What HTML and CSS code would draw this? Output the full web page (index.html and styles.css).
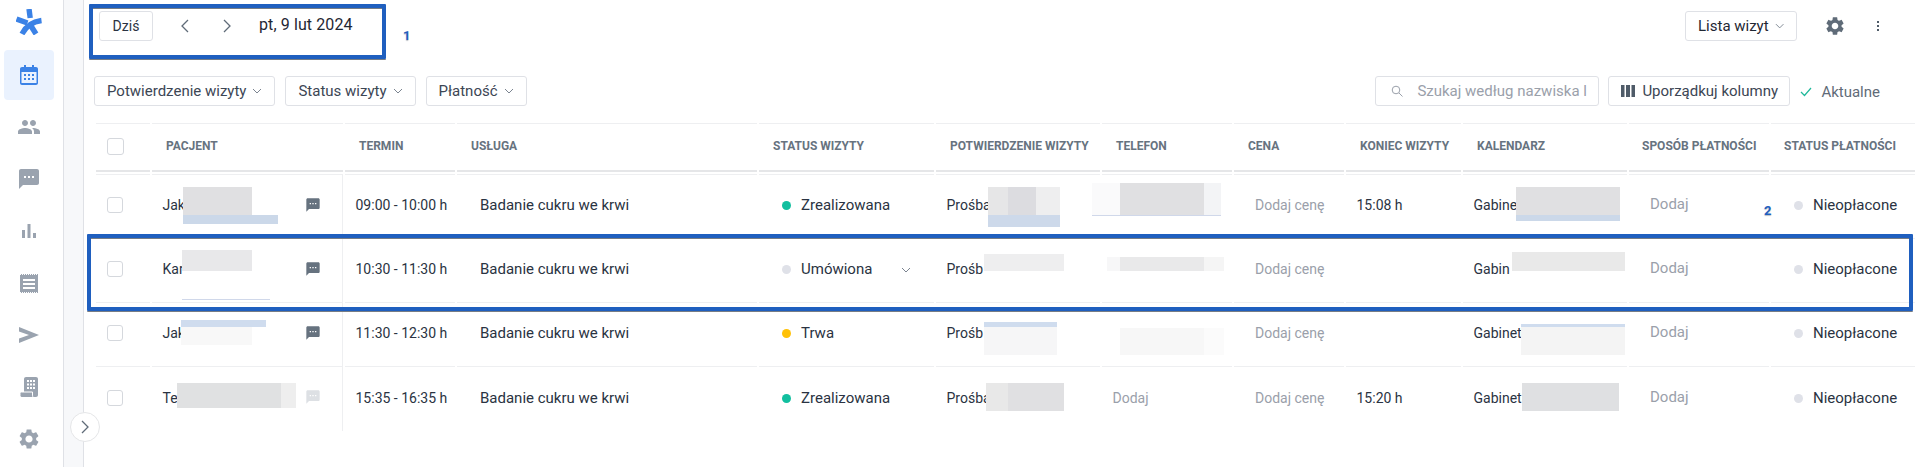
FILE: index.html
```html
<!DOCTYPE html>
<html lang="pl">
<head>
    <meta charset="UTF-8">
    <meta name="viewport" content="width=device-width, initial-scale=1.0">
    <title>Lista wizyt</title>
    <link rel="stylesheet" href="styles.css">
</head>
<body>
    <svg class="defs" aria-hidden="true">
        <symbol id="chev" viewBox="0 0 10 6"><path d="M1 1l4 4 4-4" fill="none" stroke="currentColor" stroke-width="1"/></symbol>
        <symbol id="sms" viewBox="0 0 24 24"><path fill="currentColor" d="M20 2H4c-1.100 0-1.990.9-1.990 2L2 22l4-4h14c1.100 0 2-.9 2-2V4c0-1.100-.9-2-2-2zM9 11H7V9h2v2zm4 0h-2V9h2v2zm4 0h-2V9h2v2z"/></symbol>
        <symbol id="gear" viewBox="0 0 24 24"><path fill="currentColor" d="M19.14 12.94c.04-.3.06-.61.06-.94 0-.32-.02-.64-.07-.94l2.03-1.58c.18-.14.23-.41.12-.61l-1.92-3.32c-.12-.22-.37-.29-.59-.22l-2.39.96c-.5-.38-1.03-.7-1.62-.94l-.36-2.54c-.04-.24-.24-.41-.48-.41h-3.84c-.24 0-.43.17-.47.41l-.36 2.54c-.59.24-1.13.57-1.62.94l-2.39-.96c-.22-.08-.47 0-.59.22L2.74 8.87c-.12.21-.08.47.12.61l2.03 1.58c-.05.3-.09.63-.09.94s.02.64.07.94l-2.03 1.58c-.18.14-.23.41-.12.61l1.92 3.32c.12.22.37.29.59.22l2.39-.96c.5.38 1.03.7 1.62.94l.36 2.54c.05.24.24.41.48.41h3.84c.24 0 .44-.17.47-.41l.36-2.54c.59-.24 1.13-.56 1.62-.94l2.39.96c.22.08.47 0 .59-.22l1.92-3.32c.12-.22.07-.47-.12-.61l-2.01-1.58zM12 15.6c-1.980 0-3.600-1.620-3.600-3.600s1.620-3.600 3.600-3.600 3.600 1.620 3.600 3.600-1.620 3.600-3.600 3.600z"/></symbol>
    </svg>

    <div class="app">
        <aside class="sidebar">
            <svg class="logo" viewBox="0 0 26 26">
                <g fill="none" stroke="#3b82e6" stroke-width="5.400">
                    <path d="M13 0l1.200 9"/>
                    <path d="M0.500 10l11 4"/>
                    <path d="M25.500 11.500c-8 1-15.500 5.500-19.500 13.500"/>
                    <path d="M15 17l5 8"/>
                </g>
            </svg>
            <nav class="nav">
                <a class="nav-item active">
                    <svg width="18" height="20" viewBox="0 0 18 20"><path fill="currentColor" d="M4 0h2v2h6V0h2v2h2c1.100 0 2 .9 2 2v14c0 1.100-.9 2-2 2H2c-1.100 0-2-.9-2-2V4c0-1.100.9-2 2-2h2z"/><path fill="#eaf2fe" d="M1.500 7h15v11h-15z"/><path fill="currentColor" d="M4 9h2v2H4zm4 0h2v2H8zm4 0h2v2h-2zM4 13h2v2H4zm4 0h2v2H8zm4 0h2v2h-2z"/></svg>
                </a>
                <a class="nav-item">
                    <svg width="24" height="24" viewBox="0 0 24 24"><path fill="currentColor" d="M16 11c1.660 0 2.990-1.340 2.990-3S17.660 5 16 5c-1.660 0-3 1.340-3 3s1.340 3 3 3zm-8 0c1.660 0 2.990-1.340 2.990-3S9.660 5 8 5C6.340 5 5 6.340 5 8s1.340 3 3 3zm0 2c-2.330 0-7 1.170-7 3.500V19h14v-2.500c0-2.330-4.670-3.500-7-3.500zm8 0c-.29 0-.62.02-.97.05 1.160.84 1.970 1.970 1.970 3.450V19h6v-2.500c0-2.330-4.670-3.500-7-3.500z"/></svg>
                </a>
                <a class="nav-item"><svg width="24" height="24"><use href="#sms"/></svg></a>
                <a class="nav-item">
                    <svg width="14" height="14" viewBox="0 0 14 14"><path fill="currentColor" d="M0 6h3v8H0zM5.500 0h3v14h-3zM11 9h3v5h-3z"/></svg>
                </a>
                <a class="nav-item">
                    <svg width="18" height="19" viewBox="0 0 18 19"><path fill="currentColor" d="M0 0h18v19H0z"/><path fill="#fff" d="M3 5h12v2H3zm0 4h12v2H3zm0 4h12v2H3z"/><path d="M0 .5h18M0 18.500h18" stroke="#fff" stroke-width="1" stroke-dasharray="1 1"/></svg>
                </a>
                <a class="nav-item">
                    <svg width="20" height="16" viewBox="0 0 20 16"><path fill="currentColor" d="M0 0l20 8L0 16v-4.500L10 8 0 4.500z"/></svg>
                </a>
                <a class="nav-item">
                    <svg width="18" height="20" viewBox="0 0 18 20"><path fill="currentColor" d="M6 0h10c1.100 0 2 .9 2 2v16c0 1.100-.9 2-2 2H6c-1.100 0-2-.9-2-2V2c0-1.100.9-2 2-2z"/><path fill="currentColor" stroke="#fff" stroke-width="1" d="M1.500 15h11v3c0 1.100.4 2.500 1 2.500H2c-1.100 0-2-.9-2-2v-2c0-.8.7-1.500 1.500-1.500z"/><path fill="#fff" d="M7 3h2v2H7zm3 0h2v2h-2zm3 0h2v2h-2zM7 6.500h2v2H7zm3 0h2v2h-2zm3 0h2v2h-2zM7 10h2v2H7zm3 0h2v2h-2zm3 0h2v2h-2z"/></svg>
                </a>
                <a class="nav-item"><svg width="24" height="24"><use href="#gear"/></svg></a>
            </nav>
        </aside>
        <div class="strip"></div>

        <main class="main">
            <header class="toolbar">
                <div class="date-nav">
                    <button class="btn today">Dziś</button>
                    <svg class="arrow first" width="9" height="14" viewBox="0 0 9 14"><path d="M8 1L2 7l6 6" fill="none" stroke="#5f6b78" stroke-width="1.300"/></svg>
                    <svg class="arrow" width="9" height="14" viewBox="0 0 9 14"><path d="M1 1l6 6-6 6" fill="none" stroke="#5f6b78" stroke-width="1.300"/></svg>
                    <span class="date">pt, 9 lut 2024</span>
                </div>
                <div class="view-tools">
                    <button class="btn view-btn">Lista wizyt <svg class="chev"><use href="#chev"/></svg></button>
                    <svg class="top-gear" width="22" height="22"><use href="#gear"/></svg>
                    <svg class="kebab" width="4" height="12" viewBox="0 0 4 12"><path fill="#4f5b68" d="M1 1h2v2H1zm0 4h2v2H1zm0 4h2v2H1z"/></svg>
                </div>
            </header>

            <section class="filters">
                <button class="btn filter">Potwierdzenie wizyty <svg class="chev"><use href="#chev"/></svg></button>
                <button class="btn filter">Status wizyty <svg class="chev"><use href="#chev"/></svg></button>
                <button class="btn filter">Płatność <svg class="chev"><use href="#chev"/></svg></button>
                <div class="filters-right">
                    <div class="search">
                        <svg width="12" height="12" viewBox="0 0 12 12"><circle cx="5" cy="5" r="3.800" fill="none" stroke="#9aa0aa" stroke-width="1"/><path d="M8 8l3.500 3.500" stroke="#9aa0aa" stroke-width="1"/></svg>
                        <span>Szukaj według nazwiska l</span>
                    </div>
                    <button class="btn columns-btn">
                        <svg width="14" height="12" viewBox="0 0 14 12"><path fill="#4f5b68" d="M0 0h3.500v12H0zm5 0h4v12H5zm5.500 0H14v12h-3.500z"/></svg>
                        Uporządkuj kolumny
                    </button>
                    <span class="synced">
                        <svg width="12" height="10" viewBox="0 0 12 10"><path d="M1 5l3.500 3.500L11 1" fill="none" stroke="#1fb89a" stroke-width="1.200"/></svg>
                        Aktualne
                    </span>
                </div>
            </section>

            <table class="visits">
                <colgroup>
                    <col class="c-check"><col class="c-patient"><col class="c-term"><col class="c-service">
                    <col class="c-status"><col class="c-confirm"><col class="c-phone"><col class="c-price">
                    <col class="c-end"><col class="c-cal"><col class="c-method"><col class="c-pay">
                </colgroup>
                <thead>
                    <tr>
                        <th><span class="checkbox head"></span></th>
                        <th>Pacjent</th>
                        <th>Termin</th>
                        <th>Usługa</th>
                        <th>Status wizyty</th>
                        <th>Potwierdzenie wizyty</th>
                        <th>Telefon</th>
                        <th>Cena</th>
                        <th>Koniec wizyty</th>
                        <th>Kalendarz</th>
                        <th>Sposób płatności</th>
                        <th>Status płatności</th>
                    </tr>
                </thead>
                <tbody>
                    <tr>
                        <td><span class="checkbox"></span></td>
                        <td class="patient">Jak<i class="blot b1a"></i><i class="blot b1b"></i><svg class="note" width="16" height="16"><use href="#sms"/></svg></td>
                        <td>09:00 - 10:00 h</td>
                        <td class="wide big">Badanie cukru we krwi</td>
                        <td class="wide big"><span class="dot green"></span>Zrealizowana</td>
                        <td>Prośba<i class="blot b2a"></i><i class="blot b2b"></i></td>
                        <td><i class="blot b3a"></i></td>
                        <td class="add muted">Dodaj cenę</td>
                        <td>15:08 h</td>
                        <td>Gabine<i class="blot b4a"></i><i class="blot b4b"></i></td>
                        <td class="add big muted">Dodaj</td>
                        <td class="wide big"><span class="dot grey"></span>Nieopłacone</td>
                    </tr>
                    <tr>
                        <td><span class="checkbox"></span></td>
                        <td class="patient">Kar<i class="blot c1a"></i><i class="blot c1b"></i><svg class="note" width="16" height="16"><use href="#sms"/></svg></td>
                        <td>10:30 - 11:30 h</td>
                        <td class="wide big">Badanie cukru we krwi</td>
                        <td class="wide big"><span class="dot grey"></span>Umówiona<svg class="chev row-chev"><use href="#chev"/></svg></td>
                        <td>Prośb<i class="blot c2a"></i></td>
                        <td><i class="blot c3a"></i></td>
                        <td class="add muted">Dodaj cenę</td>
                        <td></td>
                        <td>Gabin<i class="blot c4a"></i></td>
                        <td class="add big muted">Dodaj</td>
                        <td class="wide big"><span class="dot grey"></span>Nieopłacone</td>
                    </tr>
                    <tr>
                        <td><span class="checkbox"></span></td>
                        <td class="patient">Jak<i class="blot d1a"></i><i class="blot d1b"></i><svg class="note" width="16" height="16"><use href="#sms"/></svg></td>
                        <td>11:30 - 12:30 h</td>
                        <td class="wide big">Badanie cukru we krwi</td>
                        <td class="wide big"><span class="dot amber"></span>Trwa</td>
                        <td>Prośb<i class="blot d2a"></i><i class="blot d2b"></i></td>
                        <td><i class="blot d3a"></i></td>
                        <td class="add muted">Dodaj cenę</td>
                        <td></td>
                        <td>Gabinet<i class="blot d4a"></i><i class="blot d4b"></i></td>
                        <td class="add big muted">Dodaj</td>
                        <td class="wide big"><span class="dot grey"></span>Nieopłacone</td>
                    </tr>
                    <tr>
                        <td><span class="checkbox"></span></td>
                        <td class="patient">Te<i class="blot e1a"></i><svg class="note faint" width="16" height="16"><use href="#sms"/></svg></td>
                        <td>15:35 - 16:35 h</td>
                        <td class="wide big">Badanie cukru we krwi</td>
                        <td class="wide big"><span class="dot green"></span>Zrealizowana</td>
                        <td>Prośba<i class="blot e2a"></i></td>
                        <td class="muted">Dodaj</td>
                        <td class="add muted">Dodaj cenę</td>
                        <td>15:20 h</td>
                        <td>Gabinet<i class="blot e4a"></i></td>
                        <td class="add big muted">Dodaj</td>
                        <td class="wide big"><span class="dot grey"></span>Nieopłacone</td>
                    </tr>
                </tbody>
            </table>
        </main>

        <!-- things that sit on top of the page -->
        <button class="collapse"><svg width="9" height="14" viewBox="0 0 9 14"><path d="M1 1l6 6-6 6" fill="none" stroke="#5f6b78" stroke-width="1.300"/></svg></button>
        <div class="mark mark-date"></div>
        <div class="mark mark-row"></div>
        <span class="mark-num num-1">1</span>
        <span class="mark-num num-2">2</span>
    </div>
</body>
</html>
```

FILE: styles.css
```css
* {
    box-sizing: border-box;
}
html, body {
    margin: 0;
    padding: 0;
    height: 100%;
    overflow: hidden;
    background-color: white;
}
body {
    font-family: Roboto, "Liberation Sans", sans-serif;
    font-size: 14px;
    color: #2a3342;
}
.defs {
    position: absolute;
    width: 0;
    height: 0;
}
.app {
    position: relative;
    display: flex;
    height: 467px;
}

/* sidebar */
.sidebar {
    width: 64px;
    flex-shrink: 0;
    padding: 9px 9px 0 4px;
    border-right: 1px solid #dfe1e6;
}
.logo {
    display: block;
    width: 26px;
    height: 26px;
    margin: 0 0 15px 12px;
}
.nav {
    display: flex;
    flex-direction: column;
    gap: 2px;
}
.nav-item {
    display: flex;
    align-items: center;
    justify-content: center;
    width: 50px;
    height: 50px;
    border-radius: 4px;
    color: #9aa3af;
}
.nav-item.active {
    background-color: #eaf2fe;
    color: #3b82e6;
}
.strip {
    width: 20px;
    flex-shrink: 0;
    background-color: #f7f8fa;
    border-right: 1px solid #dfe1e6;
}

/* toolbar */
.main {
    flex: 1;
    min-width: 0;
    padding: 10px 2px 0 10px;
}
.toolbar {
    display: flex;
    justify-content: space-between;
    height: 31px;
}
.date-nav {
    display: flex;
    align-items: center;
    padding-left: 5px;
}
.btn {
    display: inline-flex;
    align-items: center;
    height: 30px;
    padding: 0 12px;
    background-color: white;
    border: 1px solid #dfe1e6;
    border-radius: 3px;
    font-family: inherit;
    font-size: 15px;
    color: #2a3342;
    white-space: nowrap;
}
.today {
    width: 54px;
    justify-content: center;
    padding: 0;
    font-size: 14px;
}
.arrow {
    margin-left: 34px;
}
.arrow.first {
    margin-left: 27px;
}
.date {
    margin: 0 0 3px 27px;
    font-size: 16px;
    letter-spacing: 0.1px;
    color: #1f2733;
}
.view-tools {
    display: flex;
    align-items: center;
    padding-right: 33px;
}
.view-btn {
    width: 112px;
    color: #1f2733;
}
.chev {
    width: 10px;
    height: 6px;
    margin-left: 6px;
    color: #7b8490;
}
.top-gear {
    margin-left: 27px;
    color: #5f6b78;
}
.kebab {
    margin-left: 30px;
}

/* filters */
.filters {
    display: flex;
    gap: 10px;
    margin-top: 35px;
}
.filters .btn {
    color: #3c4654;
}
.filters-right {
    display: flex;
    align-items: center;
    margin-left: auto;
    padding-right: 33px;
}
.search {
    display: flex;
    align-items: center;
    gap: 14px;
    width: 224px;
    height: 30px;
    padding-left: 15px;
    border: 1px solid #dfe1e6;
    border-radius: 3px;
    font-size: 15px;
    color: #9aa0aa;
    white-space: nowrap;
    overflow: hidden;
}
.columns-btn {
    gap: 7px;
    width: 182px;
    margin-left: 9px;
    padding: 0 0 0 12px;
}
.synced {
    display: flex;
    align-items: center;
    gap: 9px;
    margin-left: 10px;
    padding-top: 2px;
    font-size: 15px;
    color: #5f6b78;
}

/* table */
.visits {
    table-layout: fixed;
    border-collapse: separate;
    border-spacing: 2px 0;
    width: 1821px;
    margin-top: 17px;
}
.c-check { width: 54px; }
.c-patient { width: 191px; }
.c-term { width: 110px; }
.c-service { width: 300px; }
.c-status { width: 175px; }
.c-confirm { width: 164px; }
.c-phone { width: 130px; }
.c-price { width: 110px; }
.c-end { width: 115px; }
.c-cal { width: 164px; }
.c-method { width: 140px; }
.c-pay { width: 144px; }

.visits thead::after {
    content: "";
    display: table-row;
    height: 2px;
}
.visits th {
    height: 49px;
    padding: 0 0 2px 14px;
    border-top: 1px solid #eeeff1;
    border-bottom: 2px solid #e5e6e8;
    text-align: left;
    font-size: 12px;
    font-weight: 700;
    text-transform: uppercase;
    white-space: nowrap;
    color: #67737f;
}
.visits th:nth-child(n+11) {
    padding-left: 13px;
}
.visits td {
    position: relative;
    height: 64px;
    padding: 0 0 3px 10.500px;
    border-bottom: 1px solid #eeeff1;
    font-size: 14px;
    white-space: nowrap;
}
.visits tbody tr:first-child td {
    height: 65px;
    border-top: 1px solid #eeeff1;
}
.visits tbody tr:last-child td {
    border-bottom: none;
}
.visits td.wide {
    padding-left: 23px;
}
.visits td.add {
    padding-left: 21px;
}
.visits td.big {
    font-size: 15px;
}
.visits td.add.big {
    padding-bottom: 5px;
}
.visits td.patient {
    border-right: 1px solid #eeeff1;
}
.muted {
    color: #9aa0aa;
}
.checkbox {
    display: block;
    width: 16px;
    height: 16px;
    border: 1px solid #d5d8dd;
    border-radius: 3px;
}
.checkbox.head {
    width: 17px;
    height: 17px;
    margin-left: -3px;
}
.note {
    position: absolute;
    left: 153px;
    top: 22px;
    color: #66727f;
}
.note.faint {
    color: #dde0e4;
}
.dot {
    display: inline-block;
    width: 9px;
    height: 9px;
    margin-right: 10px;
    border-radius: 50%;
}
.dot.green { background-color: #12bf9f; }
.dot.amber { background-color: #ffc107; }
.dot.grey { background-color: #dfe1e8; }
.row-chev {
    position: absolute;
    left: 136px;
    top: 28px;
}

/* blurred-out personal data, sits over the cell text */
.blot {
    position: absolute;
    display: block;
}
.b1a { left: 31px; top: 12px; width: 69px; height: 28px; background-color: #e0e0e2; }
.b1b { left: 31px; top: 40px; width: 95px; height: 9px; background-color: #cbd8e9; }
.b2a { left: 52px; top: 12px; width: 72px; height: 28px; background: linear-gradient(90deg, #e6e6e7 28%, #dcdce0 28%, #dcdce0 66%, #eeeeef 66%); }
.b2b { left: 52px; top: 40px; width: 72px; height: 12px; background-color: #cdd9ea; }
.b3a { left: -10px; top: 8px; width: 129px; height: 33px; border-bottom: 1px solid #d0d8ea; background: linear-gradient(90deg, #fafafb 22%, #e0e0e2 22%, #e0e0e2 87%, #f3f4f6 87%); }
.b4a { left: 53px; top: 12px; width: 104px; height: 28px; background-color: #e0e0e2; }
.b4b { left: 53px; top: 40px; width: 104px; height: 6px; background-color: #cbd8e9; }

.c1a { left: 30px; top: 11px; width: 70px; height: 21px; background-color: #e8e8ea; }
.c1b { left: 30px; top: 60px; width: 88px; height: 1px; background-color: #d0d8ea; }
.c2a { left: 48px; top: 15px; width: 80px; height: 17px; background-color: #eeeeef; }
.c3a { left: 5px; top: 18px; width: 117px; height: 14px; background: linear-gradient(90deg, #f7f7f8 11%, #e9e9ea 11%, #e9e9ea 83%, #f5f5f5 83%); }
.c4a { left: 49px; top: 13px; width: 113px; height: 19px; background-color: #e9e9e9; }

.d1a { left: 29px; top: 17px; width: 85px; height: 7px; background-color: #cfdcee; }
.d1b { left: 29px; top: 24px; width: 71px; height: 18px; background-color: #f8f8f8; }
.d2a { left: 48px; top: 19px; width: 73px; height: 5px; background-color: #cfdcee; }
.d2b { left: 48px; top: 24px; width: 73px; height: 28px; background-color: #f6f6f7; }
.d3a { left: 18px; top: 25px; width: 104px; height: 27px; background: linear-gradient(90deg, #f7f7f7 81%, #fbfbfb 81%); }
.d4a { left: 58px; top: 21px; width: 104px; height: 3px; background-color: #cfdcee; }
.d4b { left: 58px; top: 24px; width: 104px; height: 28px; background-color: #f4f4f4; }

.e1a { left: 25px; top: 16px; width: 119px; height: 25px; background: linear-gradient(90deg, #e0e1e2 87%, #eeeeee 87%); }
.e2a { left: 50px; top: 16px; width: 78px; height: 28px; background: linear-gradient(90deg, #e8e8e8 28%, #e0e0e2 28%); }
.e4a { left: 59px; top: 16px; width: 97px; height: 28px; background-color: #dfe0e2; }

/* overlays */
.collapse {
    position: absolute;
    left: 70px;
    top: 412px;
    display: flex;
    align-items: center;
    justify-content: center;
    width: 30px;
    height: 30px;
    padding: 0;
    background-color: white;
    border: 1px solid #e5e6e8;
    border-radius: 50%;
}
.mark {
    position: absolute;
    border: 4px solid #1f5fbf;
    border-radius: 1px;
    box-shadow: 0 1px 0 #777d85, inset 0 1px 0 #777d85;
}
.mark-date {
    left: 89px;
    top: 4px;
    width: 297px;
    height: 55px;
}
.mark-row {
    left: 87px;
    top: 234px;
    width: 1826px;
    height: 77px;
}
.mark-num {
    position: absolute;
    font-size: 13px;
    font-weight: 700;
    color: #1f5fbf;
    text-shadow: 0 1px 1px #b8bcc2;
}
.num-1 { left: 403px; top: 28px; }
.num-2 { left: 1764px; top: 203px; }
```
